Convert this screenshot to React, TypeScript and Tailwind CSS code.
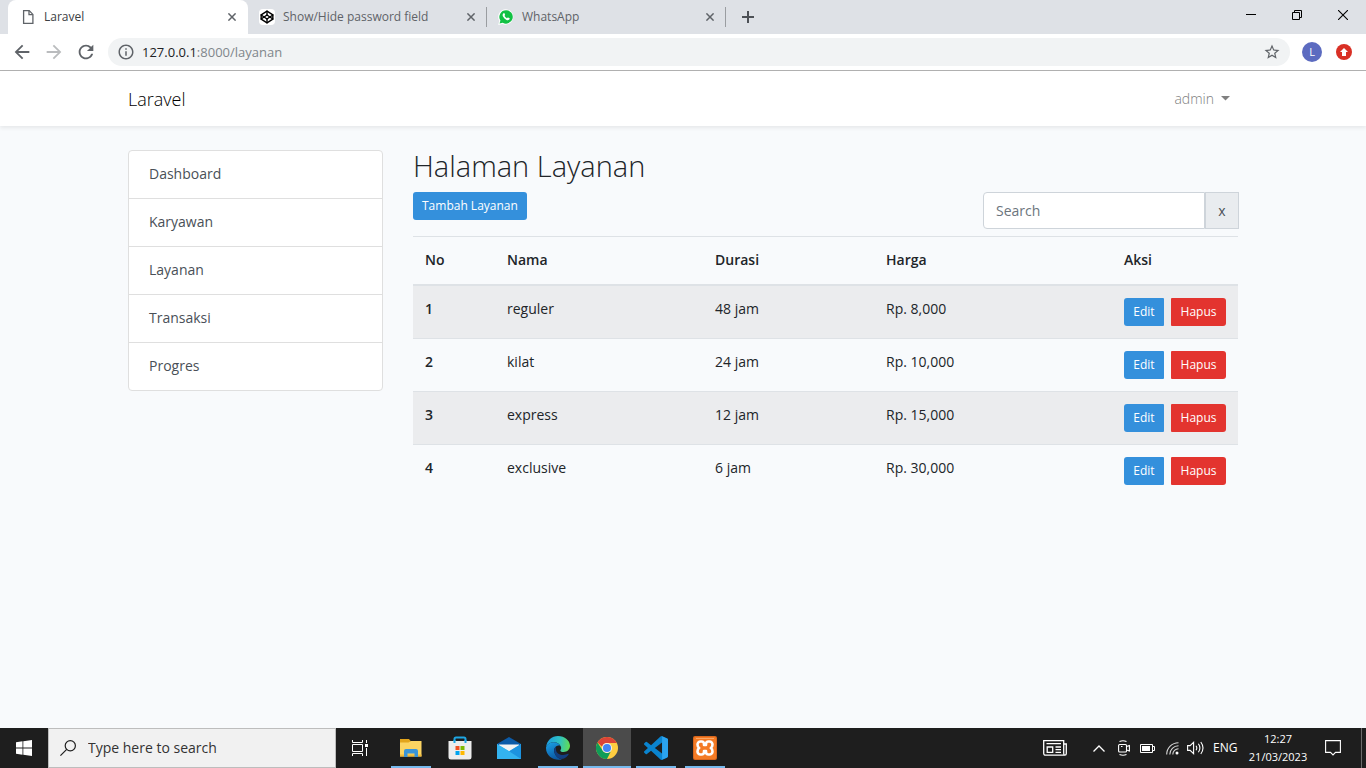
import type { ReactNode } from 'react';
import { FiCodepen } from 'react-icons/fi';
import { MdArrowBack, MdArrowForward, MdRefresh, MdStarBorder, MdInfoOutline } from 'react-icons/md';

const services = [
  { no: 1, nama: 'reguler', durasi: '48 jam', harga: 'Rp. 8,000' },
  { no: 2, nama: 'kilat', durasi: '24 jam', harga: 'Rp. 10,000' },
  { no: 3, nama: 'express', durasi: '12 jam', harga: 'Rp. 15,000' },
  { no: 4, nama: 'exclusive', durasi: '6 jam', harga: 'Rp. 30,000' },
];

const menu = ['Dashboard', 'Karyawan', 'Layanan', 'Transaksi', 'Progres'];

function CloseGlyph() {
  return (
    <svg width="8" height="8" viewBox="0 0 8 8" fill="none" stroke="#5f6368" strokeWidth="1.5" aria-hidden="true">
      <path d="M.4.4l7.2 7.2M7.6.4L.4 7.6" />
    </svg>
  );
}

function PageIcon() {
  return (
    <svg width="16" height="16" viewBox="0 0 16 16" fill="none" stroke="#5f6368" strokeWidth="1.3" aria-hidden="true">
      <path d="M3.6 1.6h5.6l3.7 3.8v9H3.6z" />
      <path d="M9 1.8v3.8h3.8" />
    </svg>
  );
}

function WhatsAppIcon() {
  return (
    <svg width="16" height="16" viewBox="0 0 16 16" aria-hidden="true">
      <path d="M8 .2A7.7 7.7 0 0 0 1.3 11.8L.2 16l4.2-1.1A7.7 7.7 0 1 0 8 .2z" fill="#fff" />
      <path d="M8.1 1.2a6.7 6.7 0 0 0-5.7 10.3l-.8 3 3.1-.8A6.7 6.7 0 1 0 8.1 1.2z" fill="#12c144" />
      <path d="M5.6 4.3c.3-.3.8-.2.9.1l.6 1.4c.1.3-.6.9-.5 1.2.5 1 1.300 1.700 2.300 2.200.4.1.8-.9 1.200-.7l1.500.7c.4.3-.1 1.300-.6 1.600-.8.5-1.700.4-2.500.1A7 7 0 0 1 5 7.600c-.6-1.200-.6-2.400.6-3.300z" fill="#fff" />
    </svg>
  );
}

function Tab({ icon, title, active = false }: { icon: ReactNode; title: string; active?: boolean }) {
  return (
    <div
      className={
        active
          ? 'flex h-[34px] w-60 items-center rounded-t-lg bg-white px-3 text-[#3c4043]'
          : 'flex h-[34px] w-[239px] items-center pl-[11px] text-[#5f6368]'
      }
    >
      <span className="flex size-4 items-center justify-center">{icon}</span>
      <span className="ml-2 flex-1 whitespace-nowrap text-[12px] leading-4">{title}</span>
      <button type="button" aria-label={`Close ${title}`} className={active ? 'flex size-2' : 'mr-[11px] flex size-2'}>
        <CloseGlyph />
      </button>
      {!active && <span className="h-5 w-px bg-[#9a9da1]" />}
    </div>
  );
}

function BrowserChrome() {
  return (
    <header className="border-b border-[#b2b2b2] bg-white">
      <div className="flex h-[34px] items-start bg-[#dee1e6]">
        <div className="flex pl-2">
          <Tab active title="Laravel" icon={<PageIcon />} />
          <Tab
            title="Show/Hide password field"
            icon={
              <span className="flex size-4 items-center justify-center rounded-sm bg-white">
                <FiCodepen size={14} color="#000" strokeWidth={2.4} />
              </span>
            }
          />
          <Tab title="WhatsApp" icon={<WhatsAppIcon />} />
        </div>
        <button type="button" aria-label="New tab" className="ml-4 flex h-[34px] items-center">
          <svg width="12" height="12" viewBox="0 0 12 12" stroke="#4d5156" strokeWidth="2" aria-hidden="true">
            <path d="M6 0v12M0 6h12" />
          </svg>
        </button>
        <div className="ml-auto flex h-[29px]">
          <button type="button" aria-label="Minimize" className="flex w-[46px] items-center justify-center">
            <svg width="10" height="10" viewBox="0 0 10 10" fill="none" stroke="#000" aria-hidden="true">
              <path d="M0 4.500h10" />
            </svg>
          </button>
          <button type="button" aria-label="Restore" className="flex w-[46px] items-center justify-center">
            <svg width="10" height="10" viewBox="0 0 10 10" fill="none" stroke="#000" aria-hidden="true">
              <path d="M.5 2.500h7v7h-7zM2.500 2.500v-2h7v7h-2" />
            </svg>
          </button>
          <button type="button" aria-label="Close window" className="flex w-[46px] items-center justify-center">
            <svg width="10" height="10" viewBox="0 0 10 10" fill="none" stroke="#000" strokeWidth="1.100" aria-hidden="true">
              <path d="M0 0l10 10M10 0L0 10" />
            </svg>
          </button>
        </div>
      </div>
      <div className="flex h-9 items-center pl-[11px] pr-[14px] text-[#5f6368]">
        <button type="button" aria-label="Back"><MdArrowBack size={22} /></button>
        <button type="button" aria-label="Forward" className="ml-[10px] text-[#babcbe]"><MdArrowForward size={22} /></button>
        <button type="button" aria-label="Reload" className="ml-[10px]"><MdRefresh size={22} /></button>
        <div className="ml-[11px] flex h-7 flex-1 items-center rounded-full bg-[#f1f3f4] px-[9px]">
          <MdInfoOutline size={18} />
          <span className="ml-[7px] flex-1 text-[13px] leading-5 text-[#80868b]">
            <span className="text-[#202124]">127.0.0.1</span>:8000/layanan
          </span>
          <button type="button" aria-label="Bookmark"><MdStarBorder size={18} /></button>
        </div>
        <button type="button" aria-label="Profile" className="ml-3 flex size-5 items-center justify-center rounded-full bg-[#5c6bc0] text-[11px] leading-4 text-white">
          L
        </button>
        <button type="button" aria-label="Update" className="ml-[14px] flex size-4 items-center justify-center rounded-full bg-[#d93025]">
          <svg width="8" height="8" viewBox="0 0 8 8" fill="#fff" aria-hidden="true">
            <path d="M4 0l4 4H6v4H2V4H0z" />
          </svg>
        </button>
      </div>
    </header>
  );
}

function Navbar() {
  return (
    <nav className="relative h-[55px] bg-white shadow-[0_2px_4px_rgba(0,0,0,0.075)]">
      <div className="mx-auto flex h-full max-w-[1140px] items-center justify-between px-[15px]">
        <a href="#" className="text-[18px] font-light leading-7 text-black">Laravel</a>
        <button type="button" className="mr-2 flex items-center gap-[7px] text-[14px] font-light leading-6 text-[#808080]">
          admin
          <svg width="9" height="5" viewBox="0 0 9 5" fill="#808080" aria-hidden="true">
            <path d="M0 0h9L4.500 4.500z" />
          </svg>
        </button>
      </div>
    </nav>
  );
}

function Content() {
  return (
    <main className="mx-auto flex w-full max-w-[1140px] flex-1 items-start gap-[30px] px-[15px] pt-6 text-[14px] leading-[23px] text-[#212529]">
      <ul className="w-[255px] shrink-0 divide-y divide-[#dfdfdf] rounded border border-[#dfdfdf] bg-white">
        {menu.map((item) => (
          <li key={item}>
            <a href="#" className="block px-5 pb-[13px] pt-[11px] text-[#495057]">{item}</a>
          </li>
        ))}
      </ul>
      <section className="min-w-0 flex-1">
        <h1 className="mb-[10px] text-[29px] font-light leading-8">Halaman Layanan</h1>
        <div className="mb-[7px] flex items-start justify-between">
          <button type="button" className="h-7 rounded-[3px] bg-[#3490dc] px-[9px] text-[12px] leading-5 text-white">
            Tambah Layanan
          </button>
          <form className="-mr-px flex h-[37px] w-64" onSubmit={(e) => e.preventDefault()}>
            <input
              type="text"
              aria-label="Search"
              placeholder="Search"
              className="min-w-0 flex-1 rounded-l border border-[#ced4da] bg-white px-3 placeholder:text-[#6c757d] focus:outline-none"
            />
            <button type="button" aria-label="Clear search" className="w-[34px] border border-[#ced4da] bg-[#e9ecef] text-[14px] text-[#495057]">
              x
            </button>
          </form>
        </div>
        <table className="w-full table-fixed border-separate border-spacing-0 text-left">
          <colgroup>
            <col className="w-[82px]" />
            <col className="w-[208px]" />
            <col className="w-[171px]" />
            <col className="w-[238px]" />
            <col className="w-[126px]" />
          </colgroup>
          <thead>
            <tr>
              {['No', 'Nama', 'Durasi', 'Harga', 'Aksi'].map((h) => (
                <th key={h} scope="col" className="border-b-2 border-t border-[#dee2e6] px-3 pb-[13px] pt-[11px] font-semibold">{h}</th>
              ))}
            </tr>
          </thead>
          <tbody className="align-top [&>tr+tr>*]:border-t [&>tr>*]:border-[#dee2e6]">
            {services.map((s) => (
              <tr key={s.no} className="odd:bg-[#ebecee]">
                <th scope="row" className="px-3 pt-[11px] font-semibold">{s.no}</th>
                <td className="px-3 pt-[11px]">{s.nama}</td>
                <td className="px-3 pt-[11px]">{s.durasi}</td>
                <td className="px-3 pt-[11px]">{s.harga}</td>
                <td className="p-3">
                  <div className="flex justify-between text-[12px] leading-5 text-white">
                    <button type="button" className="h-7 w-10 rounded-l-[3px] rounded-r-[1px] bg-[#3490dc] font-medium">Edit</button>
                    <button type="button" className="h-7 w-[55px] rounded-l-[1px] rounded-r-[3px] bg-[#e3342f] font-medium">Hapus</button>
                  </div>
                </td>
              </tr>
            ))}
          </tbody>
        </table>
      </section>
    </main>
  );
}

function FolderIcon() {
  return (
    <svg width="24" height="24" viewBox="0 0 24 24" aria-hidden="true">
      <path d="M1 3h9l2 2.500V9H1z" fill="#e3a51c" />
      <path d="M1 6.500h8.500L12 5h10.500v15.500H1z" fill="#fcd462" />
      <path d="M1 18.500h21.500v2H1z" fill="#efb93c" />
      <path d="M5 21v-6a2 2 0 0 1 2-2h10a2 2 0 0 1 2 2v6h-3.500v-3.500h-7V21z" fill="#3a94d8" />
    </svg>
  );
}

function StoreIcon() {
  return (
    <svg width="24" height="24" viewBox="0 0 24 24" aria-hidden="true">
      <path d="M6.500 7V3q0-1.500 1.500-1.500h8q1.500 0 1.500 1.500v4" fill="none" stroke="#1ea7e4" strokeWidth="2" />
      <path d="M.5 5h23v16a2.500 2.500 0 0 1-2.500 2.500H3A2.500 2.500 0 0 1 .5 21z" fill="#ededed" />
      <path d="M6.500 7V4M17.500 7V4" stroke="#1ea7e4" strokeWidth="2" />
      <path d="M7.500 10h4v4h-4z" fill="#f25022" />
      <path d="M12.500 10h4v4h-4z" fill="#7fba00" />
      <path d="M7.500 15h4v4h-4z" fill="#00a4ef" />
      <path d="M12.500 15h4v4h-4z" fill="#ffb900" />
    </svg>
  );
}

function MailIcon() {
  return (
    <svg width="24" height="24" viewBox="0 0 24 24" aria-hidden="true">
      <path d="M0 8l12-7 12 7v6H0z" fill="#0c5ba8" />
      <path d="M2 8.500h20v5l-10 3-10-3z" fill="#f3f3f3" />
      <path d="M0 8l13.500 8L0 23z" fill="#39b9f0" />
      <path d="M24 8v15H0z" fill="#39b9f0" />
      <path d="M12 15.200L24 23H0V8z" fill="#33b3f0" />
      <path d="M12 15.200L24 23V8z" fill="#1c93e0" />
    </svg>
  );
}

function EdgeIcon() {
  return (
    <svg width="24" height="24" viewBox="0 0 24 24" aria-hidden="true">
      <defs>
        <linearGradient id="edgeTop" x1="0" y1="0.4" x2="1" y2="0.5">
          <stop offset="0" stopColor="#1b9de2" />
          <stop offset="0.55" stopColor="#2fc2c3" />
          <stop offset="1" stopColor="#62dd52" />
        </linearGradient>
        <linearGradient id="edgeLeft" x1="0" y1="0" x2="0.4" y2="1">
          <stop offset="0" stopColor="#1aa3e8" />
          <stop offset="1" stopColor="#0c59a4" />
        </linearGradient>
      </defs>
      <path d="M.1 11C.8 4.600 5.800 0 12 0c6.800 0 12 4.600 12 9.800 0 3.600-2.800 6.200-6.200 6.200-2.700 0-3.800-1-3.400-1.800.9-1.200.9-2.200.5-3.400C14 8.400 11.200 6.300 7.800 6.300 4.300 6.300 1.500 8.200.1 11z" fill="url(#edgeTop)" />
      <path d="M.1 11C1.500 8.200 4.300 6.300 7.800 6.300c2.800 0 5.300 1.400 6.400 3.400-4.200-.7-6.700 2.500-5.900 6.300.7 3.700 3.900 6.600 7.700 7.300C9.400 25.400 0 21 0 12z" fill="url(#edgeLeft)" />
      <path d="M10 10.800c-1.700 1.400-2.100 3.200-1.700 5.200.9 4.500 5.200 7.700 9 6.800 2.400-1 4.200-2.700 5.300-4.400.3-.6-.1-.9-.6-.6-4.900 2.400-11.300.9-12-3.900-.2-1.200-.2-2.100 0-3.100z" fill="#123e80" />
    </svg>
  );
}

function ChromeIcon() {
  return (
    <svg width="22" height="22" viewBox="0 0 48 48" aria-hidden="true">
      <circle cx="24" cy="24" r="24" fill="#ffcd40" />
      <path d="M3.200 12A24 24 0 0 1 44.800 12l.5 1H24a11 11 0 0 0-10.500 8z" fill="#db4437" />
      <path d="M3.200 12l11.300 17.500a11 11 0 0 0 18 1.500L24 48A24 24 0 0 1 3.200 12z" fill="#0f9d58" />
      <circle cx="24" cy="24" r="11" fill="#f1f1f1" />
      <circle cx="24" cy="24" r="8.800" fill="#4285f4" />
    </svg>
  );
}

function VsCodeIcon() {
  return (
    <svg width="24" height="24" viewBox="0 0 100 100" aria-hidden="true">
      <path d="M96.460 10.800L75.860.87a6.230 6.230 0 0 0-7.100 1.210L29.350 38.040 12.190 25.010a4.160 4.160 0 0 0-5.320.24L1.360 30.260a4.170 4.170 0 0 0 0 6.160L16.250 50 1.360 63.580a4.170 4.170 0 0 0 0 6.160l5.510 5.010a4.160 4.160 0 0 0 5.320.24L29.350 61.960l39.410 35.960a6.220 6.220 0 0 0 7.100 1.210l20.600-9.910A6.250 6.250 0 0 0 100 83.590V16.410a6.250 6.250 0 0 0-3.540-5.610zM75.020 72.700L45.110 50l29.910-22.700z" fill="#0a84cf" />
      <path d="M75.500 1l21 9.800a6.250 6.250 0 0 1 3.500 5.600v67.200a6.250 6.250 0 0 1-3.500 5.600L75.500 99z" fill="#2ba3ee" />
    </svg>
  );
}

function XamppIcon() {
  return (
    <svg width="24" height="24" viewBox="0 0 24 24" aria-hidden="true">
      <rect width="24" height="24" rx="2" fill="#d9661c" />
      <rect x="1" y="1" width="22" height="22" rx="1.500" fill="#f47b25" />
      <path d="M3 2.500h18" stroke="#fba766" />
      <path
        d="M7.500 5.500h1A2.500 2.500 0 0 1 11 8v1h2V8a2.500 2.500 0 0 1 2.500-2.500h1a3 3 0 0 1 3 3q0 2.500-1.700 3.500 1.700 1 1.700 3.500a3 3 0 0 1-3 3h-1A2.500 2.500 0 0 1 13 16v-1h-2v1a2.500 2.500 0 0 1-2.500 2.500h-1a3 3 0 0 1-3-3q0-2.500 1.700-3.500-1.700-1-1.700-3.500a3 3 0 0 1 3-3z"
        fill="none"
        stroke="#fff"
        strokeWidth="2.600"
        strokeLinejoin="round"
      />
    </svg>
  );
}

type TaskbarApp = { name: string; icon: ReactNode; running: boolean; focused?: boolean };

const apps: TaskbarApp[] = [
  { name: 'File Explorer', icon: <FolderIcon />, running: true },
  { name: 'Microsoft Store', icon: <StoreIcon />, running: false },
  { name: 'Mail', icon: <MailIcon />, running: false },
  { name: 'Microsoft Edge', icon: <EdgeIcon />, running: true },
  { name: 'Google Chrome', icon: <ChromeIcon />, running: true, focused: true },
  { name: 'Visual Studio Code', icon: <VsCodeIcon />, running: true },
  { name: 'XAMPP', icon: <XamppIcon />, running: true },
];

function Taskbar() {
  return (
    <footer className="flex h-10 items-stretch bg-[#1e1e1e] text-white">
      <button type="button" aria-label="Start" className="flex w-12 items-center justify-center">
        <svg width="16" height="16" viewBox="0 0 16 16" fill="#fff" aria-hidden="true">
          <path d="M0 2.200l6.500-.9v6.300H0zM7.300 1.200L16 0v7.600H7.300zM0 8.400h6.500v6.300L0 13.800zM7.300 8.400H16V16l-8.700-1.200z" />
        </svg>
      </button>
      <label className="flex w-72 items-center border border-[#bdbdbd] bg-[#f1f1f1] pl-[11px]">
        <svg width="16" height="16" viewBox="0 0 16 16" fill="none" stroke="#1f1f1f" strokeWidth="1.200" aria-hidden="true">
          <circle cx="10.300" cy="5.700" r="5.100" />
          <path d="M6.700 9.300L.4 15.600" />
        </svg>
        <input
          type="text"
          aria-label="Type here to search"
          placeholder="Type here to search"
          className="ml-3 min-w-0 flex-1 bg-transparent text-[14px] leading-5 placeholder:text-[#333] focus:outline-none"
        />
      </label>
      <button type="button" aria-label="Task View" className="flex w-12 items-center justify-center">
        <svg width="16" height="16" viewBox="0 0 16 16" fill="none" stroke="#fff" aria-hidden="true">
          <path d="M.5 4.500h10v7H.5zM.5 0v2.500h10V0M.5 16v-2.500h10V16M14.500 0v3M14.500 8v8" />
          <path d="M13 4h3v3h-3z" fill="#fff" stroke="none" />
        </svg>
      </button>
      <div className="ml-[3px] flex gap-px">
        {apps.map((a) => (
          <button
            key={a.name}
            type="button"
            aria-label={a.name}
            className={a.focused ? 'flex w-12 flex-col items-center bg-[#4b4b4b]' : 'flex w-12 flex-col items-center'}
          >
            <span className="flex flex-1 items-center pt-[2px]">{a.icon}</span>
            <span className={a.focused ? 'h-[2px] w-full bg-[#76b9ed]' : a.running ? 'h-[2px] w-10 bg-[#76b9ed]' : 'h-[2px] w-10'} />
          </button>
        ))}
      </div>
      <div className="ml-auto flex items-center">
        <svg width="24" height="16" viewBox="0 0 24 16" fill="none" stroke="#fff" strokeWidth="1.300" aria-hidden="true">
          <path d="M.7.7h20v12.500q0 2 1.300 2H2.700q-2 0-2-2zM20.700 4h2.600v9.500q0 1.700-1.400 1.700" />
          <path d="M3.500 3.700h14.500M12.500 7h5.500M12.500 9.700h5.500M12.500 12.300h5.500M4.200 7h5.500v5.300H4.200z" />
        </svg>
        <svg className="ml-[26px]" width="12" height="7" viewBox="0 0 12 7" fill="none" stroke="#fff" strokeWidth="1.300" aria-hidden="true">
          <path d="M.5 6.500L6 1l5.500 5.500" />
        </svg>
        <svg className="ml-[13px]" width="12" height="16" viewBox="0 0 12 16" fill="none" stroke="#fff" strokeWidth="1.100" aria-hidden="true">
          <path d="M1.500 1.500Q5 0 8.500 1.500M1.500 14.500q3.500 1.500 7 0" />
          <rect x=".6" y="4.500" width="7.900" height="7.500" rx="1" />
          <path d="M8.500 6.500l2.900-1v5.500l-2.900-1M3 6.500h1.500" />
        </svg>
        <svg className="ml-[10px]" width="15" height="9" viewBox="0 0 15 9" fill="none" stroke="#fff" aria-hidden="true">
          <path d="M.5.5h12v8H.5zM12.500 2.500h2v4h-2" />
          <path d="M2 2h8v5H2z" fill="#fff" stroke="none" />
        </svg>
        <svg className="ml-[11px]" width="13" height="13" viewBox="0 0 13 13" fill="none" stroke="#d8d8d8" strokeWidth="1.100" aria-hidden="true">
          <path d="M.7 12.500A11.800 11.800 0 0 1 12.500.7M3.800 12.500a8.700 8.700 0 0 1 8.700-8.700M6.800 12.500a5.700 5.700 0 0 1 5.700-5.700" />
          <circle cx="11" cy="11" r="1.500" fill="#fff" stroke="none" />
        </svg>
        <svg className="ml-2" width="17" height="14" viewBox="0 0 17 14" fill="none" stroke="#fff" strokeWidth="1.100" aria-hidden="true">
          <path d="M.6 4.600h2.500L6.600 1.300v11.400L3.100 9.400H.6zM9 4.700q1.600 2.300 0 4.600M11.400 2.800q3 4.200 0 8.400M13.800 1q4.400 6 0 12" />
        </svg>
        <span className="ml-[9px] w-6 text-[12px] leading-4">ENG</span>
        <time className="ml-[7px] w-[68px] whitespace-nowrap text-center text-[11px] leading-[18px]">
          <span className="block">12:27</span>
          <span className="block">21/03/2023</span>
        </time>
        <button type="button" aria-label="Notifications" className="ml-[13px] flex">
          <svg width="16" height="16" viewBox="0 0 16 16" fill="none" stroke="#fff" strokeWidth="1.100" aria-hidden="true">
            <path d="M.6.6h14.800v11.800h-4.900L8 15l-2.500-2.600H.6z" />
          </svg>
        </button>
        <span className="ml-5 mr-1 h-10 w-px bg-[#6b6b6b]" />
      </div>
    </footer>
  );
}

export default function App() {
  return (
    <div className="flex min-h-screen flex-col bg-[#f8fafc] font-['Open_Sans','Noto_Sans',sans-serif]">
      <BrowserChrome />
      <Navbar />
      <Content />
      <Taskbar />
    </div>
  );
}
